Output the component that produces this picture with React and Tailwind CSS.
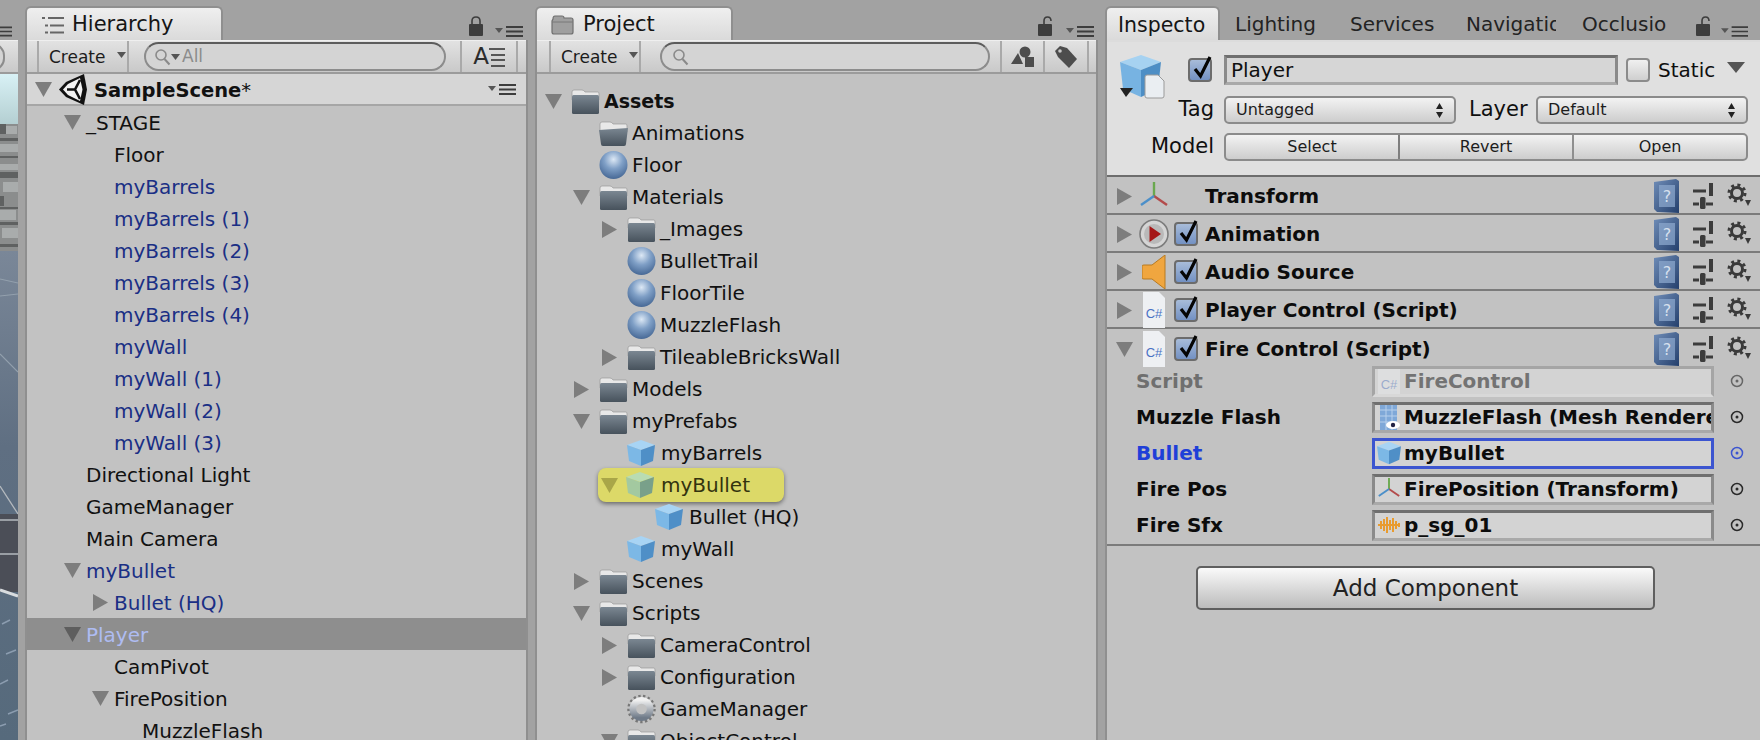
import React from "react"

function Arrow({ dir = "down", color = "#7d7d7d" }) {
  if (dir === "right") {
    return (
      <svg width="15" height="17" viewBox="0 0 15 17" className="shrink-0">
        <path d="M0 0 L15 8.5 L0 17 Z" fill={color} />
      </svg>
    )
  }
  return (
    <svg width="17" height="15" viewBox="0 0 17 15" className="shrink-0">
      <path d="M0 0 L17 0 L8.5 15 Z" fill={color} />
    </svg>
  )
}

function Folder({ open }) {
  return (
    <svg width="29" height="26" viewBox="0 0 29 26" className="shrink-0">
      <defs>
        <linearGradient id="fold" x1="0" y1="0" x2="0" y2="1">
          <stop offset="0" stopColor="#7b8792" />
          <stop offset="1" stopColor="#47525c" />
        </linearGradient>
      </defs>
      <path d="M1 4 Q1 2 3 2 L11 2 Q13 2 14 4 L27 4 Q28 4 28 6 L28 12 L1 12 Z" fill="#e8e8e8" stroke="#9a9a9a" strokeWidth="0.7" />
      {open ? (
        <path d="M0 10 L29 8 L27 24 Q27 26 25 26 L4 26 Q2 26 2 24 Z" fill="url(#fold)" />
      ) : (
        <rect x="1" y="7" width="27" height="19" rx="1.5" fill="url(#fold)" />
      )}
    </svg>
  )
}

function Sphere() {
  return (
    <svg width="29" height="30" viewBox="0 0 29 30" className="shrink-0">
      <defs>
        <radialGradient id="sph" cx="0.5" cy="0.3" r="0.75">
          <stop offset="0" stopColor="#dce8f5" />
          <stop offset="0.45" stopColor="#7f9fc6" />
          <stop offset="1" stopColor="#3f618f" />
        </radialGradient>
      </defs>
      <circle cx="14.5" cy="15" r="14" fill="url(#sph)" />
    </svg>
  )
}

function Cube({ green, size = 28 }) {
  return (
    <svg width={size} height={size} viewBox="0 0 28 28" className="shrink-0">
      <path d="M14 1 L28 6 L14 11 L0 6 Z" fill={green ? "#b9dcb2" : "#a8d4f4"} />
      <path d="M0 6 L14 11 L14 27 L2 22 Z" fill={green ? "#a3c9a0" : "#7cb8e6"} />
      <path d="M28 6 L14 11 L14 27 L26 22 Z" fill={green ? "#79a08a" : "#4f8fc7"} />
    </svg>
  )
}

function BigGear() {
  return (
    <svg width="29" height="30" viewBox="0 0 30 30" className="shrink-0">
      <defs>
        <linearGradient id="gg" x1="0" y1="0" x2="0" y2="1">
          <stop offset="0" stopColor="#f0f0f0" />
          <stop offset="1" stopColor="#6f7a88" />
        </linearGradient>
      </defs>
      <circle cx="15" cy="15" r="13" fill="none" stroke="#777" strokeWidth="3.5" strokeDasharray="2.4 2.4" />
      <circle cx="15" cy="15" r="9" fill="none" stroke="url(#gg)" strokeWidth="7" />
    </svg>
  )
}

function UnityLogo() {
  return (
    <svg width="28" height="31" viewBox="0 0 28 31" className="shrink-0">
      <path d="M0 15.5 L7 8 L25 0 L28 15.5 L25 31 L7 23 Z" fill="#111" />
      <path d="M4 15.5 L9 10 L21 4 L23.5 15.5 L21 27 L9 21 Z" fill="#f2f2f2" />
      <path d="M8 15.5 L16 15.5 M16 15.5 L21 6 M16 15.5 L21 25" stroke="#111" strokeWidth="2.6" fill="none" />
    </svg>
  )
}

function Lock({ open }) {
  return (
    <svg width="16" height="20" viewBox="0 0 16 20" className="shrink-0">
      {open ? (
        <path d="M7 9 L7 5 Q7 1 10.5 1 Q14 1 14 5" fill="none" stroke="#3d3d3d" strokeWidth="1.6" />
      ) : (
        <path d="M4 9 L4 5 Q4 1 8 1 Q12 1 12 5 L12 9" fill="none" stroke="#3d3d3d" strokeWidth="1.6" />
      )}
      <rect x="1" y="8" width="14" height="12" rx="1" fill="#3d3d3d" />
    </svg>
  )
}

function MenuIcon({ w = 28 }) {
  return (
    <svg width={w} height="11" viewBox="0 0 28 11" className="shrink-0">
      <path d="M0 2 L8 2 L4 7 Z" fill="#555" />
      <path d="M11 1 H28 M11 5.5 H28 M11 10 H28" stroke="#3d3d3d" strokeWidth="1.8" />
    </svg>
  )
}

function SearchIcon({ color = "#8a8a8a" }) {
  return (
    <svg width="17" height="18" viewBox="0 0 17 18" className="shrink-0">
      <circle cx="7" cy="7" r="5" fill="none" stroke={color} strokeWidth="1.6" />
      <path d="M10.5 11 L15.5 16.5" stroke={color} strokeWidth="2" />
    </svg>
  )
}

function Caret() {
  return (
    <svg width="9" height="6" viewBox="0 0 9 6" className="shrink-0">
      <path d="M0 0 H9 L4.5 6 Z" fill="#555" />
    </svg>
  )
}

function Tab({ icon, label, className }) {
  return (
    <div className={"flex items-center rounded-t-md border-x-2 border-t-2 border-[#8f8f8f] bg-linear-to-b from-[#efefef] to-[#dadada] h-[34px] pt-[2px] text-[#151515] " + className}>
      {icon}
      <span>{label}</span>
    </div>
  )
}

function Toolbar({ className, children }) {
  return (
    <div className={"flex items-center h-[34px] shrink-0 border-t border-[#efefef] border-b-2 border-b-[#9b9b9b] bg-linear-to-b from-[#e2e2e2] to-[#c9c9c9] " + className}>
      {children}
    </div>
  )
}

function CreateBtn() {
  return (
    <div className="flex items-center h-full w-[92px] border-x-2 border-[#a9a9a9] pl-[10px] pt-[3px] text-[17px] text-[#1c1c1c]">
      <span>Create</span>
      <span className="ml-[11px] mb-[7px]"><Caret /></span>
    </div>
  )
}

const hierarchyIndent = ["pl-[31px]", "pl-[59px]", "pl-[87px]"]
const projectIndent = ["pl-[2px]", "pl-[30px]", "pl-[58px]", "pl-[86px]"]

const hierarchyRows = [
  { t: "_STAGE", d: 0, a: "down" },
  { t: "Floor", d: 1 },
  { t: "myBarrels", d: 1, blue: true },
  { t: "myBarrels (1)", d: 1, blue: true },
  { t: "myBarrels (2)", d: 1, blue: true },
  { t: "myBarrels (3)", d: 1, blue: true },
  { t: "myBarrels (4)", d: 1, blue: true },
  { t: "myWall", d: 1, blue: true },
  { t: "myWall (1)", d: 1, blue: true },
  { t: "myWall (2)", d: 1, blue: true },
  { t: "myWall (3)", d: 1, blue: true },
  { t: "Directional Light", d: 0 },
  { t: "GameManager", d: 0 },
  { t: "Main Camera", d: 0 },
  { t: "myBullet", d: 0, a: "down", blue: true },
  { t: "Bullet (HQ)", d: 1, a: "right", blue: true },
  { t: "Player", d: 0, a: "down", sel: true },
  { t: "CamPivot", d: 1 },
  { t: "FirePosition", d: 1, a: "down" },
  { t: "MuzzleFlash", d: 2 },
]

const projectRows = [
  { t: "Assets", d: 0, a: "down", i: "folder", bold: true },
  { t: "Animations", d: 1, i: "open" },
  { t: "Floor", d: 1, i: "sphere" },
  { t: "Materials", d: 1, a: "down", i: "folder" },
  { t: "_Images", d: 2, a: "right", i: "folder" },
  { t: "BulletTrail", d: 2, i: "sphere" },
  { t: "FloorTile", d: 2, i: "sphere" },
  { t: "MuzzleFlash", d: 2, i: "sphere" },
  { t: "TileableBricksWall", d: 2, a: "right", i: "folder" },
  { t: "Models", d: 1, a: "right", i: "folder" },
  { t: "myPrefabs", d: 1, a: "down", i: "folder" },
  { t: "myBarrels", d: 2, i: "cube" },
  { t: "myBullet", d: 2, a: "down", i: "green", hl: true },
  { t: "Bullet (HQ)", d: 3, i: "cube" },
  { t: "myWall", d: 2, i: "cube" },
  { t: "Scenes", d: 1, a: "right", i: "folder" },
  { t: "Scripts", d: 1, a: "down", i: "folder" },
  { t: "CameraControl", d: 2, a: "right", i: "folder" },
  { t: "Configuration", d: 2, a: "right", i: "folder" },
  { t: "GameManager", d: 2, i: "gear" },
  { t: "ObjectControl", d: 2, a: "down", i: "folder" },
]

function AssetIcon({ kind }) {
  if (kind === "folder") return <Folder />
  if (kind === "open") return <Folder open />
  if (kind === "sphere") return <Sphere />
  if (kind === "gear") return <BigGear />
  if (kind === "green") return <Cube green />
  return <Cube />
}

function HierarchyRow({ row }) {
  const color = row.sel ? "text-[#aebcf2]" : row.blue ? "text-[#1a2f85]" : "text-[#111111]"
  return (
    <div className={"flex items-center h-8 shrink-0 " + hierarchyIndent[row.d] + " " + (row.sel ? "bg-[#8e8e8e] " : "") + color}>
      <div className="flex w-[28px] justify-center shrink-0">
        {row.a && <Arrow dir={row.a} color={row.sel ? "#5e5e5e" : "#7d7d7d"} />}
      </div>
      <span className="whitespace-nowrap pt-[2px]">{row.t}</span>
    </div>
  )
}

function ProjectRow({ row }) {
  if (row.hl) {
    return (
      <div className="flex items-center h-8 shrink-0 pl-[61px]">
        <div className="flex items-center w-[186px] h-[34px] rounded-lg bg-[#dcd968] shadow-[0_2px_4px_rgba(0,0,0,0.45)]">
          <div className="flex w-[28px] pl-[3px] shrink-0">
            <Arrow dir={row.a} color="#a9a648" />
          </div>
          <AssetIcon kind={row.i} />
          <span className="ml-[7px] text-[#33330f]">{row.t}</span>
        </div>
      </div>
    )
  }
  return (
    <div className={"flex items-center h-8 shrink-0 " + projectIndent[row.d]}>
      <div className="flex w-[32px] shrink-0">
        <div className="flex w-[28px] justify-center">
          {row.a && <Arrow dir={row.a} />}
        </div>
      </div>
      <AssetIcon kind={row.i} />
      <span className={"whitespace-nowrap text-[#111111] " + (row.i === "cube" ? "ml-[6px] " : "ml-[4px] ") + (row.bold ? "font-bold text-[19px]" : "")}>{row.t}</span>
    </div>
  )
}

function SceneSliver() {
  return (
    <div className="flex flex-col w-[18px] shrink-0 h-[740px]">
      <div className="flex h-[40px] items-end pb-[3px] overflow-hidden shrink-0">
        <div className="ml-[-14px]"><MenuIcon w={26} /></div>
      </div>
      <div className="flex h-[34px] items-center shrink-0 overflow-hidden border-t border-[#efefef] border-b-2 border-b-[#9b9b9b] bg-linear-to-b from-[#e2e2e2] to-[#c9c9c9]">
        <div className="ml-[-20px] w-[25px] h-[28px] shrink-0 rounded-full border-2 border-[#8c8c8c] bg-[#d4d4d4]"></div>
      </div>
      <svg width="18" height="666" viewBox="0 0 18 666" className="shrink-0">
        <defs>
          <linearGradient id="sky" x1="0" y1="0" x2="0" y2="1">
            <stop offset="0" stopColor="#d8f1f5" />
            <stop offset="1" stopColor="#b4cfd2" />
          </linearGradient>
          <linearGradient id="ground" x1="0" y1="0" x2="0" y2="1">
            <stop offset="0" stopColor="#7a8798" />
            <stop offset="0.4" stopColor="#5f6f82" />
            <stop offset="1" stopColor="#566a7c" />
          </linearGradient>
        </defs>
        <rect width="18" height="50" fill="url(#sky)" />
        <rect y="50" width="18" height="127" fill="#8b8d8d" />
        <path d="M6 52 H17 V60 H6 Z M0 70 H18 V78 H0 Z M0 90 H18 V96 H0 Z M3 108 H18 V118 H3 Z M0 136 H16 V146 H0 Z M2 154 H18 V164 H2 Z" fill="#a9acac" />
        <path d="M0 50 H6 V60 H0 Z M0 64 H18 V67 H0 Z M0 82 H18 V84 H0 Z M0 98 H18 V104 H0 Z M0 122 H4 V132 H0 Z M0 133 H18 V135 H0 Z M0 148 H18 V151 H0 Z M0 170 H18 V173 H0 Z" fill="#5f6161" />
        <rect y="177" width="18" height="489" fill="url(#ground)" />
        <path d="M0 205 L18 209 M0 222 L18 220 M0 280 L18 298" stroke="#93a0ad" strokeWidth="1.2" />
        <rect y="440" width="18" height="78" fill="#4b4e57" />
        <path d="M0 412 L18 440 M0 446 H18 M0 480 H18" stroke="#b4b9be" strokeWidth="1.3" />
        <path d="M0 516 L18 522" stroke="#d8dcdf" strokeWidth="3" />
        <path d="M2 550 L10 546 M6 580 L16 576 M0 610 L8 606 M8 640 L18 636 M0 652 L6 650" stroke="#8c9db0" strokeWidth="1.4" />
      </svg>
    </div>
  )
}

function HierarchyPanel() {
  return (
    <div className="flex flex-col w-[503px] ml-[7px] shrink-0 h-[740px]">
      <div className="flex items-end h-[40px] shrink-0">
        <Tab className="w-[198px] pl-[15px] text-[21px]" label="Hierarchy" icon={
          <svg width="22" height="17" viewBox="0 0 22 17" className="mr-[8px]">
            <path d="M0 1 H3 M6 1 H22 M3 8.5 H6 M8 8.5 H22 M3 15.5 H6 M8 15.5 H22" stroke="#666" strokeWidth="2" />
          </svg>
        } />
        <div className="ml-[245px] mb-[4px]"><Lock /></div>
        <div className="ml-[11px] mb-[3px]"><MenuIcon /></div>
      </div>
      <div className="flex flex-col flex-1 min-h-0 overflow-hidden border-x-2 border-[#8f8f8f] bg-[#c2c2c2] text-[20px]">
        <Toolbar className="pl-[10px]">
          <CreateBtn />
          <div className="flex items-center ml-[15px] w-[302px] h-[29px] pl-[8px] rounded-full border-2 border-[#8c8c8c] border-t-[#5c5c5c] bg-[#d4d4d4] text-[#8b8b8b] text-[17px]">
            <SearchIcon />
            <Caret />
            <span className="ml-[2px]">All</span>
          </div>
          <div className="flex items-center justify-center ml-[14px] w-[58px] h-full border-x-2 border-[#a9a9a9]">
            <span className="text-[23px] leading-none text-[#2c2c2c] mr-[-2px]">A</span>
            <svg width="18" height="20" viewBox="0 0 18 20">
              <path d="M2 2 H18 M4 8 H18 M4 13 H18 M4 19 H18" stroke="#2c2c2c" strokeWidth="1.6" />
            </svg>
          </div>
        </Toolbar>
        <div className="flex items-center h-[32px] shrink-0 border-b-2 border-[#a6a6a6] bg-[#d6d6d6] pl-[8px] pr-[10px]">
          <div className="w-[24px] shrink-0"><Arrow /></div>
          <UnityLogo />
          <span className="ml-[7px] pt-[3px] font-bold text-[19.5px] text-[#111111]">SampleScene<span className="font-normal">*</span></span>
          <div className="ml-auto"><MenuIcon /></div>
        </div>
        {hierarchyRows.map((row) => (
          <HierarchyRow key={row.t + row.d} row={row} />
        ))}
      </div>
    </div>
  )
}

function ProjectPanel() {
  return (
    <div className="flex flex-col w-[563px] ml-[7px] shrink-0 h-[740px]">
      <div className="flex items-end h-[40px] shrink-0">
        <Tab className="w-[198px] pl-[14px] text-[21px]" label="Project" icon={
          <svg width="23" height="20" viewBox="0 0 23 20" className="mr-[9px]">
            <path d="M2 4 Q2 1 4 1 L11 1 Q13 1 13 3 L20 3 Q22 3 22 5 L22 17 Q22 19 20 19 L3 19 Q1 19 1 17 L1 6 Z" fill="#9f9f9f" stroke="#6f6f6f" strokeWidth="1.2" />
            <path d="M1 7 H22" stroke="#787878" strokeWidth="1" />
          </svg>
        } />
        <div className="ml-[304px] mb-[4px]"><Lock open /></div>
        <div className="ml-[13px] mb-[3px]"><MenuIcon /></div>
      </div>
      <div className="flex flex-col flex-1 min-h-0 overflow-hidden border-x-2 border-[#8f8f8f] bg-[#c2c2c2] text-[20px]">
        <Toolbar className="pl-[12px]">
          <CreateBtn />
          <div className="flex items-center ml-[19px] w-[330px] h-[29px] pl-[10px] rounded-full border-2 border-[#8c8c8c] border-t-[#5c5c5c] bg-[#d4d4d4]">
            <SearchIcon />
          </div>
          <div className="flex items-center justify-center ml-[10px] w-[45px] h-full border-x-2 border-[#a9a9a9]">
            <svg width="24" height="22" viewBox="0 0 24 22">
              <path d="M7 7 L0 18 L12 18 Z" fill="#4d4d4d" />
              <circle cx="14" cy="6" r="5.5" fill="#4d4d4d" />
              <rect x="14" y="11" width="9" height="10" fill="#4d4d4d" />
            </svg>
          </div>
          <div className="flex items-center justify-center w-[44px] h-full border-r-2 border-[#a9a9a9]">
            <svg width="24" height="24" viewBox="0 0 24 24">
              <path d="M1 6 L6 1 L13 3 L23 14 L15 23 L4 12 Z" fill="#4d4d4d" />
              <circle cx="6" cy="6" r="1.8" fill="#c9c9c9" />
            </svg>
          </div>
        </Toolbar>
        <div className="flex flex-col pt-[11px]">
          {projectRows.map((row) => (
            <ProjectRow key={row.t + row.d} row={row} />
          ))}
        </div>
      </div>
    </div>
  )
}

function Check() {
  return (
    <div className="relative w-[24px] h-[24px] shrink-0 rounded-[4px] border-2 border-[#6c6c6c] bg-linear-to-b from-[#a8bcd9] to-[#7391c3]">
      <svg width="24" height="26" viewBox="0 0 24 26" className="absolute left-[1px] top-[-6px]">
        <path d="M4 15 L9.5 22 L19 3" fill="none" stroke="#050505" strokeWidth="3.2" />
      </svg>
    </div>
  )
}

function UpDown() {
  return (
    <svg width="7" height="15" viewBox="0 0 7 15" className="shrink-0">
      <path d="M3.5 0 L7 6 H0 Z M0 9 H7 L3.5 15 Z" fill="#222" />
    </svg>
  )
}

function Popup({ label, className }) {
  return (
    <div className={"flex items-center justify-between h-[28px] rounded-[5px] border-2 border-[#8b8b8b] bg-linear-to-b from-[#f3f3f3] to-[#cdcdcd] pl-[10px] pr-[11px] text-[16px] text-[#1d1d1d] " + className}>
      <span>{label}</span>
      <UpDown />
    </div>
  )
}

function Transform({ size = 28 }) {
  return (
    <svg width={size} height={size} viewBox="0 0 28 28" className="shrink-0">
      <path d="M14 14 L14 0" stroke="#6aa84f" strokeWidth="2.4" />
      <path d="M14 14 L27 23" stroke="#b34b4b" strokeWidth="2.4" />
      <path d="M14 14 L1 23" stroke="#4b8fc9" strokeWidth="2.4" />
    </svg>
  )
}

function CsFile({ faded }) {
  return (
    <svg width="22" height="36" viewBox="0 0 22 36" className={"shrink-0 " + (faded ? "opacity-40" : "")}>
      <path d="M0 0 H16 L22 6 V36 H0 Z" fill="#eef0f3" />
      <text x="11" y="26" textAnchor="middle" fontSize="13" fontFamily="Liberation Sans" fill="#4a72c4">C#</text>
    </svg>
  )
}

function AnimIcon() {
  return (
    <svg width="30" height="36" viewBox="0 0 30 36" className="shrink-0">
      <circle cx="15" cy="18" r="14" fill="#d5d5d5" stroke="#7c7c7c" strokeWidth="1.6" />
      <circle cx="15" cy="18" r="10" fill="#b9b9b9" />
      <path d="M10.5 10 L22 18 L10.5 26 Z" fill="#a51616" />
    </svg>
  )
}

function SpeakerIcon() {
  return (
    <svg width="24" height="34" viewBox="0 0 24 34" className="shrink-0">
      <path d="M0 11 Q0 10 2 10 L10 10 L23 0 V34 L10 24 L2 24 Q0 24 0 23 Z" fill="#f0a63f" stroke="#b77a22" strokeWidth="1" />
    </svg>
  )
}

function HelpBook() {
  return (
    <svg width="26" height="34" viewBox="0 0 26 34" className="shrink-0">
      <defs>
        <linearGradient id="bk" x1="0" y1="0" x2="1" y2="1">
          <stop offset="0" stopColor="#6f8db8" />
          <stop offset="1" stopColor="#243f6c" />
        </linearGradient>
      </defs>
      <path d="M1 3 L23 0 L26 2 V34 L4 33 L1 30 Z" fill="url(#bk)" />
      <rect x="6" y="6" width="16" height="22" fill="#8ba7cc" opacity="0.75" />
      <text x="14" y="23" textAnchor="middle" fontSize="16" fontFamily="DejaVu Sans" fill="#d6e0ee">?</text>
    </svg>
  )
}

function Sliders() {
  return (
    <svg width="20" height="26" viewBox="0 0 20 26" className="shrink-0">
      <path d="M0 8 H13 M0 21 H6 M13 21 H20" stroke="#3c3c3c" strokeWidth="3" />
      <rect x="16" y="0" width="4" height="13" fill="#3c3c3c" />
      <rect x="7" y="14" width="5.5" height="12" rx="1.5" fill="#3c3c3c" />
    </svg>
  )
}

function SmallGear() {
  return (
    <svg width="24" height="26" viewBox="0 0 24 26" className="shrink-0">
      <circle cx="10" cy="10" r="8" fill="none" stroke="#3a3a3a" strokeWidth="3" strokeDasharray="3 3.3" />
      <circle cx="10" cy="10" r="5.5" fill="none" stroke="#3a3a3a" strokeWidth="3" />
      <path d="M18 17 H24 L21 23 Z" fill="#3a3a3a" />
    </svg>
  )
}

function CompRow({ label, icon, open, noCheck }) {
  return (
    <div className={"flex items-center h-[38px] shrink-0 pt-[2px] " + (open ? "" : "border-b-2 border-[#7b7b7b]")}>
      <div className="flex justify-center w-[35px] shrink-0"><Arrow dir={open ? "down" : "right"} /></div>
      <div className="flex justify-center w-[26px] shrink-0 ml-[-1px]">{icon}</div>
      <div className="flex w-[38px] shrink-0 justify-end pr-[7px]">{!noCheck && <Check />}</div>
      <span className="font-bold text-[20px] text-[#0c0c0c] whitespace-nowrap">{label}</span>
      <div className="flex items-center ml-auto">
        <HelpBook />
        <div className="ml-[14px]"><Sliders /></div>
        <div className="ml-[14px] mr-[9px]"><SmallGear /></div>
      </div>
    </div>
  )
}

function PropRow({ label, icon, value, faded, active }) {
  const labelColor = faded ? "text-[#6f6f6f]" : active ? "text-[#1f3fd8]" : "text-[#0c0c0c]"
  const fieldBorder = active
    ? "border-[#3c55d0]"
    : faded
      ? "border-[#a5a5a5] border-b-[#d8d8d8]"
      : "border-[#8a8a8a] border-t-[#6f6f6f] border-b-[#a9a9a9]"
  return (
    <div className="flex items-center h-[36px] shrink-0">
      <span className={"w-[265px] pl-[29px] shrink-0 font-bold text-[20px] " + labelColor}>{label}</span>
      <div className={"flex items-center w-[342px] h-[31px] shrink-0 overflow-hidden border-[3px] bg-[#d3d3d3] pl-[3px] " + fieldBorder}>
        <div className="flex justify-center w-[22px] shrink-0">{icon}</div>
        <span className={"ml-[4px] font-bold text-[20px] whitespace-nowrap " + (faded ? "text-[#737373]" : "text-[#0c0c0c]")}>{value}</span>
      </div>
      <svg width="14" height="14" viewBox="0 0 14 14" className="ml-[16px] shrink-0">
        <circle cx="7" cy="7" r="5.5" fill="none" stroke={active ? "#3c55d0" : faded ? "#666" : "#2a2a2a"} strokeWidth="1.5" />
        <circle cx="7" cy="7" r="1.5" fill={active ? "#3c55d0" : faded ? "#666" : "#2a2a2a"} />
      </svg>
    </div>
  )
}

function InspectorPanel() {
  return (
    <div className="flex flex-col flex-1 min-w-0 ml-[7px] h-[740px]">
      <div className="flex items-end h-[40px] shrink-0 text-[20px] text-[#232323]">
        <Tab className="w-[115px] pl-[11px] text-[20.5px]" label="Inspecto" />
        <span className="ml-[15px] mb-[1px] w-[115px]">Lighting</span>
        <span className="mb-[1px] w-[116px]">Services</span>
        <span className="mb-[1px] w-[90px] overflow-hidden whitespace-nowrap">Navigation</span>
        <span className="ml-[26px] mb-[1px] w-[90px]">Occlusio</span>
        <div className="ml-[23px] mb-[4px]"><Lock open /></div>
        <div className="ml-[10px] mb-[3px]"><MenuIcon w={27} /></div>
      </div>
      <div className="flex flex-col flex-1 min-h-0 overflow-hidden border-l-2 border-[#8f8f8f] bg-[#c2c2c2] text-[20px]">
        <div className="flex flex-col h-[137px] shrink-0 border-t-2 border-[#dcdcdc] border-b-2 border-b-[#6d6d6d] bg-[#e0e0e0] text-[#0f0f0f]">
          <div className="flex items-center h-[30px] mt-[13px] shrink-0">
            <div className="relative flex items-center w-[117px] shrink-0 pl-[11px]">
              <div className="relative w-[47px] h-[30px] shrink-0">
                <div className="absolute top-0 left-0">
                  <svg width="48" height="44" viewBox="0 0 48 44">
                    <path d="M23 0 L43 7 L23 15 L2 7 Z" fill="#a6d2f1" />
                    <path d="M2 7 L23 15 L23 42 L5 34 Z" fill="#77b3e2" />
                    <path d="M43 7 L23 15 L23 42 L40 34 Z" fill="#4d8ec5" />
                    <path d="M27 22 Q27 20 29 20 L40 20 L46 26 L46 41 Q46 43 44 43 L29 43 Q27 43 27 41 Z" fill="#eaeef2" stroke="#9a9a9a" strokeWidth="1" />
                    <path d="M2 33 H15 L8 42 Z" fill="#222" />
                  </svg>
                </div>
              </div>
              <div className="ml-[23px]"><Check /></div>
            </div>
            <div className="flex items-center w-[394px] h-[30px] shrink-0 border-[3px] border-[#8a8a8a] border-t-[#6f6f6f] border-b-[#a9a9a9] bg-[#d6d6d6] pl-[4px]">Player</div>
            <div className="ml-[8px] w-[24px] h-[24px] shrink-0 rounded-[4px] border-2 border-[#8b8b8b] bg-linear-to-b from-[#f0f0f0] to-[#cfcfcf]"></div>
            <span className="ml-[8px]">Static</span>
            <svg width="18" height="11" viewBox="0 0 18 11" className="ml-[12px] mb-[6px] shrink-0">
              <path d="M0 0 H18 L9 11 Z" fill="#555" />
            </svg>
          </div>
          <div className="flex items-center h-[28px] mt-[11px] shrink-0">
            <span className="w-[107px] text-right shrink-0 text-[21px]">Tag</span>
            <Popup label="Untagged" className="ml-[10px] w-[232px] shrink-0" />
            <span className="ml-[13px] w-[67px] shrink-0 text-[21px]">Layer</span>
            <Popup label="Default" className="w-[212px] shrink-0" />
          </div>
          <div className="flex items-center h-[28px] mt-[9px] shrink-0">
            <span className="w-[107px] text-right shrink-0 text-[21px]">Model</span>
            <div className="flex ml-[10px] w-[524px] h-[28px] shrink-0 rounded-[5px] border-2 border-[#8b8b8b] bg-linear-to-b from-[#f3f3f3] to-[#cdcdcd] text-[16px] text-[#1d1d1d]">
              <div className="flex items-center justify-center flex-1 border-r-2 border-[#7e7e7e]">Select</div>
              <div className="flex items-center justify-center flex-1 border-r-2 border-[#8f8f8f]">Revert</div>
              <div className="flex items-center justify-center flex-1">Open</div>
            </div>
          </div>
        </div>
        <CompRow label="Transform" icon={<Transform />} noCheck />
        <CompRow label="Animation" icon={<AnimIcon />} />
        <CompRow label="Audio Source" icon={<SpeakerIcon />} />
        <CompRow label="Player Control (Script)" icon={<CsFile />} />
        <CompRow label="Fire Control (Script)" icon={<CsFile />} open />
        <div className="flex flex-col shrink-0 mt-[-4px] border-b-2 border-[#7b7b7b] pb-[1px]">
          <PropRow label="Script" faded value="FireControl" icon={<CsFile faded />} />
          <PropRow label="Muzzle Flash" value="MuzzleFlash (Mesh Renderer)" icon={
            <svg width="22" height="26" viewBox="0 0 22 26">
              <rect x="2" y="0" width="17" height="26" fill="#7fa8d8" />
              <path d="M2 6 H19 M2 12 H19 M2 18 H19 M8 0 V26 M14 0 V26" stroke="#b8d0ec" strokeWidth="1" />
              <ellipse cx="15" cy="21" rx="7" ry="4" fill="#fff" />
              <circle cx="15" cy="21" r="2.2" fill="#224" />
            </svg>
          } />
          <PropRow label="Bullet" active value="myBullet" icon={<Cube size={24} />} />
          <PropRow label="Fire Pos" value="FirePosition (Transform)" icon={<Transform size={22} />} />
          <PropRow label="Fire Sfx" value="p_sg_01" icon={
            <svg width="22" height="20" viewBox="0 0 22 20">
              <path d="M0 10 H22 M3 6 V14 M6 4 V16 M9 2 V18 M12 5 V15 M15 3 V17 M18 6 V14 M21 8 V12" stroke="#e89b2f" strokeWidth="2" />
            </svg>
          } />
        </div>
        <div className="flex justify-center mt-[20px] pr-[16px] shrink-0">
          <div className="flex items-center justify-center w-[459px] h-[44px] rounded-[5px] border-2 border-[#5f5f5f] bg-linear-to-b from-[#fafafa] to-[#bcbcbc] text-[23px] text-[#222222]">
            Add Component
          </div>
        </div>
      </div>
    </div>
  )
}

export default function App() {
  return (
    <div className="flex w-[1760px] h-[740px] overflow-hidden bg-[#a2a2a2] font-['DejaVu_Sans',sans-serif]">
      <SceneSliver />
      <HierarchyPanel />
      <ProjectPanel />
      <InspectorPanel />
    </div>
  )
}
